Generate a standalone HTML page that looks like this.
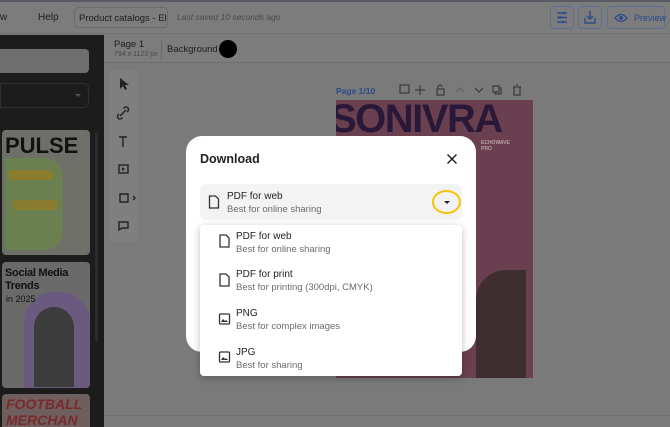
<!DOCTYPE html>
<html><head><style>
*{margin:0;padding:0;box-sizing:border-box}
html,body{width:670px;height:427px;overflow:hidden}
body{background:#7a7a7a;font-family:"Liberation Sans",Arial,sans-serif;position:relative;white-space:nowrap}
.a{position:absolute}
.top{left:0;top:0;width:670px;height:34px;background:#7c7c7c;border-bottom:1px solid #707070;border-top:2px solid #5a5a62}
.t{color:#1e1e1e;font-size:10px}
.btn{border:1px solid #5d6e94;border-radius:4px;background:#7c7c7c}
.item .h{font-size:10px;color:#222}
.item .s{font-size:9.5px;color:#6b6b6b;margin-top:2px}
</style></head><body>
<div class="a top"></div>
<div class="a t" style="left:0;top:12px">w</div>
<div class="a t" style="left:38px;top:12px">Help</div>
<div class="a" style="left:74px;top:7px;width:94px;height:21px;border:1px solid #6c6c6c;border-radius:4px;font-size:9.5px;color:#1e1e1e;padding:5px 4px;overflow:hidden">Product catalogs - Ele...</div>
<div class="a" style="left:177px;top:12px;font-size:8.5px;font-style:italic;color:#4a4a4a">Last saved 10 seconds ago</div>
<div class="a btn" style="left:550px;top:6px;width:24px;height:23px"><svg width="22" height="21" viewBox="0 0 22 21"><g stroke="#2c4a8c" stroke-width="1.4"><path d="M6 6h10M6 10.5h10M6 15h10"/><path d="M13 4.5v3M9 9v3M12 13.5v3"/></g></svg></div>
<div class="a btn" style="left:578px;top:6px;width:24px;height:23px"><svg width="22" height="21" viewBox="0 0 22 21"><g stroke="#2c4a8c" stroke-width="1.4" fill="none"><path d="M11 4v8M8 9l3 3 3-3M6 11v5h10v-5"/></g></svg></div>
<div class="a btn" style="left:607px;top:6px;width:58px;height:23px;color:#2c4a8c;font-size:9px;padding:6px 0 0 26px">Preview<svg class="a" style="left:6px;top:5px" width="14" height="12" viewBox="0 0 14 12"><path d="M1 6Q7-1 13 6Q7 13 1 6Z" fill="none" stroke="#2c4a8c" stroke-width="1.3"/><circle cx="7" cy="6" r="2" fill="#2c4a8c"/></svg></div>
<!-- left panel -->
<div class="a" style="left:0;top:35px;width:104px;height:392px;background:#1c1c1c;overflow:hidden">
<div class="a" style="left:0;top:14px;width:89px;height:24px;background:#6e6e6e;border-radius:0 4px 4px 0"></div>
<div class="a" style="left:0;top:48px;width:89px;height:25px;border:1px solid #2e2e2e;border-radius:0 5px 5px 0"></div>
<div class="a" style="left:75px;top:59px;border:3px solid transparent;border-top:3px solid #555"></div>
<div class="a" style="left:2px;top:95px;width:88px;height:125px;background:#6f6f6a;border-radius:4px;overflow:hidden"><div style="font:900 22px 'Liberation Sans';color:#111;padding:3px 0 0 3px">PULSE</div><div class="a" style="left:3px;top:28px;width:58px;height:92px;background:#6a8050;border-radius:0 18px 18px 0"></div><div class="a" style="left:6px;top:40px;width:46px;height:10px;background:#8c7d2e;border-radius:6px"></div><div class="a" style="left:10px;top:70px;width:46px;height:10px;background:#8c7d2e;border-radius:6px"></div></div>
<div class="a" style="left:2px;top:227px;width:88px;height:126px;background:#6a6a6a;border-radius:4px;overflow:hidden"><div class="a" style="left:22px;top:30px;width:66px;height:96px;background:#6a5a80;border-radius:30px 30px 0 0"></div><div class="a" style="left:32px;top:45px;width:40px;height:80px;background:#3c3c3c;border-radius:20px 20px 0 0"></div><div class="a" style="left:3px;top:5px;font:bold 11px 'Liberation Sans';color:#111;line-height:13px;letter-spacing:-.3px">Social Media<br>Trends</div><div class="a" style="left:4px;top:32px;font-size:9px;color:#111">in 2025</div></div>
<div class="a" style="left:2px;top:359px;width:88px;height:40px;background:#6e5e5e;border-radius:4px;font:italic 900 14px 'Liberation Sans';color:#7a2a2a;padding:2px 4px;overflow:hidden">FOOTBALL<br>MERCHAN</div>
<div class="a" style="left:95px;top:97px;width:3px;height:210px;background:#2a2a2a;border-radius:2px"></div>
</div>
<!-- page header -->
<div class="a" style="left:104px;top:35px;width:566px;height:28px;background:#7c7c7c;border-bottom:1px solid #707070"></div>
<div class="a" style="left:114px;top:39px;font-size:9.5px;color:#1e1e1e">Page 1</div>
<div class="a" style="left:114px;top:51px;font-size:7px;color:#4a4a4a">794 x 1123 px</div>
<div class="a" style="left:161px;top:40px;width:1px;height:20px;background:#6a6a6a"></div>
<div class="a" style="left:167px;top:44px;font-size:9.5px;color:#1e1e1e">Background</div>
<div class="a" style="left:219px;top:40px;width:18px;height:18px;border-radius:50%;background:#000"></div>
<!-- tool column -->
<div class="a" style="left:109px;top:70px;width:28px;height:172px;background:#7f7f7f"></div>
<svg class="a" style="left:109px;top:70px" width="28" height="172" viewBox="0 0 28 172"><path d="M11 8l0 11 3-3 2 4 2-1-2-4 4 0z" fill="#222"/><g fill="none" stroke="#222" stroke-width="1.4"><path d="M11 46l6-6M10 44l-1 1a2.5 2.5 0 0 0 3.5 3.5l1-1M18 42l1-1a2.5 2.5 0 0 0-3.5-3.5l-1 1"/><path d="M10 67h8M14 67v10"/><rect x="10" y="95" width="9" height="8"/><path d="M11 124h8v8h-8zM24 126l2 2-2 2M10 152h9v6h-6l-3 2z"/></g><path d="M13 97v4l3-2z" fill="#222"/></svg>
<!-- page label & toolbar -->
<div class="a" style="left:336px;top:86px;font-size:8.5px;color:#2c4a8c;font-weight:bold">Page 1/10</div>
<svg class="a" style="left:398px;top:83px" width="128" height="14" viewBox="0 0 128 14"><g fill="none" stroke="#3a3a3a" stroke-width="1.2"><rect x="2" y="2" width="9" height="8"/><path d="M22 2v10M17 7h10M39 6h7v6h-7zM40 6V4a2 2 0 0 1 4 0"/><path d="M58 9l4-4 4 4" stroke="#666"/><path d="M77 5l4 4 4-4M95 3h6v6h-6zM97 9v2h6V5h-2M115 4h8M116 4v8h6V4M118 2h2"/></g></svg>
<!-- magazine -->
<div class="a" style="left:336px;top:100px;width:197px;height:278px;background:#6a4050;overflow:hidden"><div class="a" style="left:-6px;top:-3px;font:900 40px 'Liberation Sans';color:#2a1838;letter-spacing:-1.5px">SONIVRA</div><div class="a" style="left:140px;top:170px;width:50px;height:108px;background:#3e2e30;border-radius:30px 0 0 0"></div><div class="a" style="left:145px;top:40px;font:bold 5px 'Liberation Sans';color:#b8a0a8;line-height:6px">ECHOWAVE<br>PRO</div><div class="a" style="left:130px;top:225px;font:900 16px 'Liberation Sans';color:#b890a8">S</div></div>
<div class="a" style="left:104px;top:415px;width:566px;height:1px;background:#707070"></div>
<!-- modal -->
<div class="a" style="left:186px;top:136px;width:290px;height:216px;background:#fff;border-radius:16px"></div>
<div class="a" style="left:200px;top:152px;font-size:12.5px;font-weight:bold;color:#222">Download</div>
<svg class="a" style="left:446px;top:153px" width="12" height="12" viewBox="0 0 12 12"><path d="M1.5 1.5l9 9M10.5 1.5l-9 9" stroke="#222" stroke-width="1.5"/></svg>
<div class="a" style="left:200px;top:184px;width:262px;height:36px;background:#f3f3f3;border-radius:6px"></div>
<div class="a" style="left:432px;top:190px;width:29px;height:24px;border:2.5px solid #f2c500;border-radius:50%"></div>
<div class="a" style="left:444px;top:201px;border:3px solid transparent;border-top:3.5px solid #222;border-bottom:0"></div>
<div class="a item" style="left:227px;top:191px"><div class="h">PDF for web</div><div class="s">Best for online sharing</div></div>
<svg class="a" style="left:208px;top:195px" width="12" height="14" viewBox="0 0 12 14"><path d="M1.5 1h6l3 3v9h-9z" fill="none" stroke="#333" stroke-width="1.3"/></svg>
<div class="a" style="left:200px;top:225px;width:262px;height:151px;background:#fff;border-radius:4px;box-shadow:0 2px 8px rgba(0,0,0,.25)"></div>
<div class="a item" style="left:236px;top:231px"><div class="h">PDF for web</div><div class="s">Best for online sharing</div></div>
<div class="a item" style="left:236px;top:269px"><div class="h">PDF for print</div><div class="s">Best for printing (300dpi, CMYK)</div></div>
<div class="a item" style="left:236px;top:308px"><div class="h">PNG</div><div class="s">Best for complex images</div></div>
<div class="a item" style="left:236px;top:347px"><div class="h">JPG</div><div class="s">Best for sharing</div></div>
<svg class="a" style="left:218px;top:234px" width="14" height="140" viewBox="0 0 14 140"><g fill="none" stroke="#333" stroke-width="1.3"><path d="M2 1h6l3 3v9H2zM2 40h6l3 3v9H2z"/><rect x="1.5" y="80" width="10" height="10" rx="1"/><rect x="1.5" y="118" width="10" height="10" rx="1"/></g><path d="M3 88l2-3 2 2 1-1 2 2zM3 126l2-3 2 2 1-1 2 2z" fill="#333"/></svg>
</body></html>
